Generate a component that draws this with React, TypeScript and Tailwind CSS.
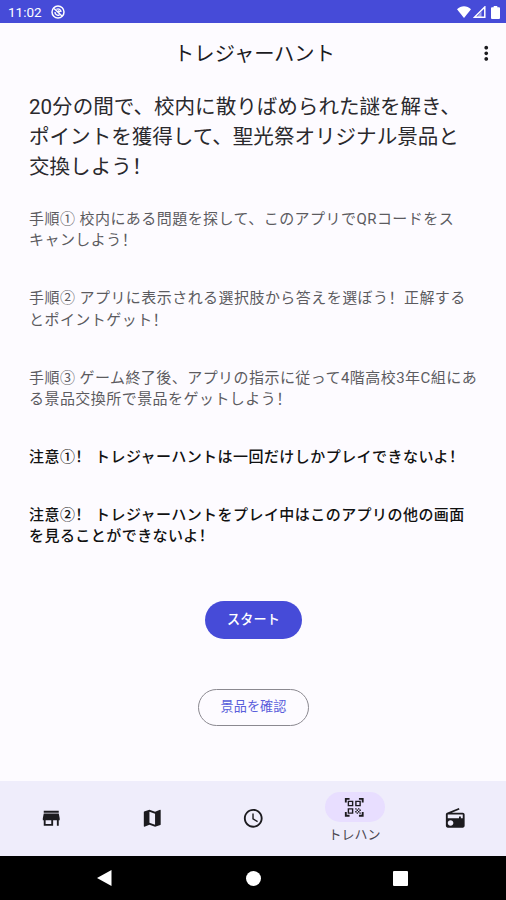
import { MdMoreVert, MdStore, MdMap, MdSchedule } from "react-icons/md";
import clsx from "clsx";

const steps = [
  "手順① 校内にある問題を探して、このアプリでQRコードをスキャンしよう！",
  "手順② アプリに表示される選択肢から答えを選ぼう！正解するとポイントゲット！",
  "手順③ ゲーム終了後、アプリの指示に従って4階高校3年C組にある景品交換所で景品をゲットしよう！",
];

const notes = [
  "注意①！ トレジャーハントは一回だけしかプレイできないよ！",
  "注意②！ トレジャーハントをプレイ中はこのアプリの他の画面を見ることができないよ！",
];

const QrIcon = () => (
  <svg viewBox="0 0 24 24" className="size-[22.5px]" fill="currentColor">
    <path d="M9.5 6.5v3h-3v-3h3M11 5H5v6h6V5zm-1.500 9.500v3h-3v-3h3M11 13H5v6h6v-6zm6.500-6.500v3h-3v-3h3M19 5h-6v6h6V5zm-6 8h1.500v1.500H13V13zm1.500 1.500H16V16h-1.500v-1.500zM16 13h1.500v1.500H16V13zm-3 3h1.500v1.500H13V16zm1.500 1.500H16V19h-1.500v-1.500zM16 16h1.500v1.500H16V16zm1.500-1.500H19V16h-1.500v-1.500zm0 3H19V19h-1.500v-1.500zM22 7h-2V4h-3V2h5v5zm0 15v-5h-2v3h-3v2h5zM2 22h5v-2H4v-3H2v5zM2 2v5h2V4h3V2H2z" />
  </svg>
);

const RadioIcon = () => (
  <svg viewBox="0 0 24 24" className="size-[22.5px]" fill="currentColor">
    <path d="M3.240 6.150C2.510 6.430 2 7.170 2 8v12c0 1.100.890 2 2 2h16c1.110 0 2-.900 2-2V8c0-1.110-.890-2-2-2H8.300l8.260-3.340L15.880 1 3.240 6.150zM7 20c-1.660 0-3-1.340-3-3s1.340-3 3-3 3 1.340 3 3-1.340 3-3 3zm13-8h-2v-2h-2v2H4V8h16v4z" />
  </svg>
);

const tabs = [
  { id: "store", icon: <MdStore className="size-[22.5px]" /> },
  { id: "map", icon: <MdMap className="size-[22.5px]" /> },
  { id: "time", icon: <MdSchedule className="size-[22.5px]" /> },
  { id: "hunt", icon: <QrIcon />, label: "トレハン" },
  { id: "radio", icon: <RadioIcon /> },
];

const StatusBar = () => (
  <div className="flex h-[23px] items-center bg-[#464bd8] pr-[6px] pl-2 text-white">
    <span className="pt-[2px] font-['Roboto'] text-[13.5px] leading-none">
      11:02
    </span>
    <svg viewBox="0 0 14 14" className="ml-[9px] size-[14px]" fill="none" stroke="currentColor">
      <circle cx="7" cy="7" r="6" strokeWidth="1.500" />
      <path d="M3 3.500l8 7.500M4 7a3 3 0 0 0 4.500 2.800M5.500 4.300A3 3 0 0 1 10 7M7 5.500l2 1.500" strokeWidth="1.400" />
    </svg>
    <div className="ml-auto flex items-center pt-[1px]">
      <svg viewBox="0 0 14 12" className="h-[12px] w-[14px]" fill="currentColor">
        <path d="M7 12L0 3.300C2 1.200 4.500.200 7 .200s5 1 7 3.100z" />
      </svg>
      <svg viewBox="0 0 13 12" className="ml-[2px] h-[12px] w-[13px]">
        <path d="M1.500 11.300L11.800 1v10.300z" fill="none" stroke="currentColor" strokeWidth="1.500" />
        <path d="M8.500 5.500V11L4 11z" fill="currentColor" opacity=".5" />
      </svg>
      <svg viewBox="0 0 9 13" className="ml-[5px] h-[13px] w-[9px]" fill="currentColor">
        <path d="M2.700 0h3.600v1.300H8q1 0 1 1V12q0 1-1 1H1q-1 0-1-1V2.300q0-1 1-1h1.700z" />
      </svg>
    </div>
  </div>
);

const App = () => {
  return (
    <div
      lang="zh-Hans"
      className="flex h-[900px] w-[506px] flex-col overflow-hidden bg-[#fdfbff] font-['Roboto','Noto_Sans_CJK_SC',sans-serif] text-[#1c1b1f]"
    >
      <StatusBar />
      <header className="grid h-[60px] grid-cols-[40px_1fr_40px] items-center">
        <h1 className="col-start-2 pt-[2px] pl-[3px] text-center text-[20.3px]">トレジャーハント</h1>
        <MdMoreVert className="ml-[9px] size-[22.5px]" />
      </header>

      <main className="flex flex-1 flex-col px-[28px] pt-[10px]">
        <h2 className="pl-[1px] text-[20.55px] leading-[29.9px] text-[#2a292d]">
          20分の間で、校内に散りばめられた謎を解き、
          <br />
          ポイントを獲得して、聖光祭オリジナル景品と
          <br />
          交換しよう！
        </h2>
        <div className="mt-[26px] space-y-[36px] pl-[1px] text-[15px] leading-[21.7px] tracking-[0.45px] [line-break:strict]">
          {steps.map((step) => (
            <p key={step} className="text-[#5c5b5f]">
              {step}
            </p>
          ))}
          {notes.map((note) => (
            <p key={note} className="font-medium text-[#111]">
              {note}
            </p>
          ))}
        </div>
        <div className="mt-[53px] flex flex-col items-center gap-[50px] text-[13.1px] font-medium tracking-[0.1px]">
          <button className="h-[37.5px] w-[97px] rounded-full bg-[#464bd8] pl-[1px] text-white">
            スタート
          </button>
          <button className="h-[37.5px] w-[111px] rounded-full border border-[#8b8990] pl-[1px] font-normal text-[#5a5edb]">
            景品を確認
          </button>
        </div>
      </main>

      <nav className="grid h-[75px] grid-cols-5 bg-[#efedfb] pl-[1px]">
        {tabs.map(({ id, icon, label }) => (
          <div key={id} className="flex flex-col items-center justify-center">
            <span
              className={clsx(
                "flex h-[30px] w-[60px] items-center justify-center rounded-full",
                label && "bg-[#e8deff]"
              )}
            >
              {icon}
            </span>
            {label && (
              <span className="mt-[3px] text-[13px] leading-[20px] text-[#49454f]">{label}</span>
            )}
          </div>
        ))}
      </nav>

      {/* system navigation */}
      <div className="flex h-[44px] items-center justify-center bg-black text-white">
        <svg viewBox="0 0 15 16" className="mr-[134px] h-4 w-[15px]" fill="currentColor">
          <path d="M0 8L14.500 0v16z" />
        </svg>
        <span className="size-[15px] rounded-full bg-white" />
        <span className="mr-[2px] ml-[132px] size-[15px] rounded-[1px] bg-white" />
      </div>
    </div>
  );
};

export default App;
